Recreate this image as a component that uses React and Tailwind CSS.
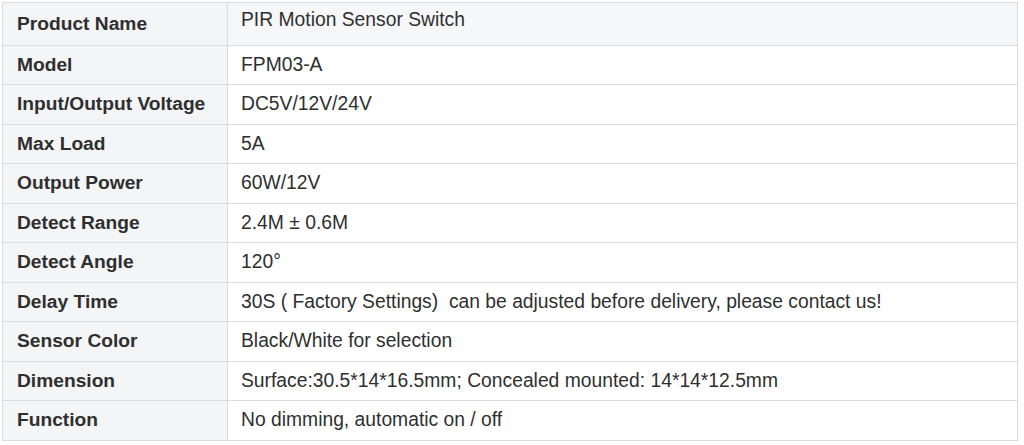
const rows = [
  ["Product Name", "PIR Motion Sensor Switch"],
  ["Model", "FPM03-A"],
  ["Input/Output Voltage", "DC5V/12V/24V"],
  ["Max Load", "5A"],
  ["Output Power", "60W/12V"],
  ["Detect Range", "2.4M ± 0.6M"],
  ["Detect Angle", "120°"],
  ["Delay Time", "30S ( Factory Settings)  can be adjusted before delivery, please contact us!"],
  ["Sensor Color", "Black/White for selection"],
  ["Dimension", "Surface:30.5*14*16.5mm; Concealed mounted: 14*14*12.5mm"],
  ["Function", "No dimming, automatic on / off"],
];

const heights = ["h-[43px]", "h-[39px]", "h-[40px]", "h-[39px]", "h-[40px]", "h-[39px]", "h-[40px]", "h-[39px]", "h-[40px]", "h-[39px]", "h-[40px]"];

export default function App() {
  return (
    <div className="w-[1024px] h-[445px] bg-white pt-[2px] pl-[2px] font-['Liberation_Sans',Arial,sans-serif] text-[#2f2f2f]">
      <div className="w-[1016px] border border-[#dcdcdc] border-b-0">
        {rows.map(([label, value], i) => (
          <div key={label} className={`flex border-b border-[#dcdcdc] ${heights[i]}`}>
            <div className="w-[225px] shrink-0 bg-[#f4f5f7] border-r border-[#dcdcdc] flex items-center pl-[14px] text-[19.2px] font-bold">
              {label}
            </div>
            <div
              className={`flex-1 flex pl-[13px] text-[19.3px] whitespace-pre ${
                i === 0 ? "bg-[#f6f7f9] items-start pt-[3px]" : "items-center"
              }`}
            >
              {value}
            </div>
          </div>
        ))}
      </div>
    </div>
  );
}
